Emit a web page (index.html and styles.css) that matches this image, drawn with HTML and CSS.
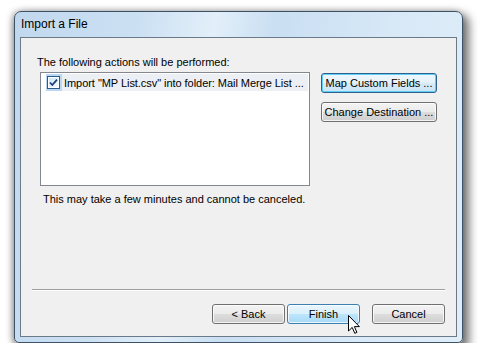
FILE: index.html
```html
<!DOCTYPE html>
<html lang="en">
  <head>
    <meta charset="UTF-8" />
    <title>Import a File</title>
    <link rel="stylesheet" href="styles.css">
  </head>
  <body>
    <div class="window">
      <div class="titlebar">
        <span class="title">Import a File</span>
      </div>
      <div class="client">
        <div class="content">
          <p class="label">The following actions will be performed:</p>
          <div class="main-row">
            <div class="listbox">
              <div class="item">
                <span class="check-cell">
                  <svg class="check" width="13" height="13" viewBox="0 0 13 13">
                    <defs>
                      <linearGradient id="cb" x1="0" y1="0" x2="1" y2="1">
                        <stop offset="0" stop-color="#cfe6f8" />
                        <stop offset="1" stop-color="#f4f9fd" />
                      </linearGradient>
                    </defs>
                    <rect x="0.5" y="0.5" width="12" height="12" fill="#fff" stroke="#2a5a8c" />
                    <rect x="2" y="2" width="9" height="9" fill="url(#cb)" />
                    <path d="M3 6.5 L5.3 9 L10 3.6" fill="none" stroke="#1d3e74" stroke-width="1.8" />
                  </svg>
                </span>
                <span class="item-text">Import "MP List.csv" into folder: Mail Merge List ...</span>
              </div>
            </div>
            <div class="side-buttons">
              <button class="btn default">Map Custom Fields ...</button>
              <button class="btn">Change Destination ...</button>
            </div>
          </div>
          <p class="note">This may take a few minutes and cannot be canceled.</p>
        </div>
        <div class="footer">
          <div class="separator"></div>
          <div class="footer-buttons">
            <button class="btn back">&lt; Back</button>
            <button class="btn hover finish">Finish</button>
            <button class="btn">Cancel</button>
          </div>
        </div>
      </div>
    </div>

    <svg class="cursor" width="12" height="19" viewBox="0 0 12 19">
      <path d="M0.5 0.5 L0.5 16 L4.2 12.4 L6.8 18.3 L8.9 17.4 L6.4 11.6 L11.4 11.6 Z" fill="#fff" stroke="#000" stroke-width="1" stroke-linejoin="miter" />
    </svg>
  </body>
</html>
```

FILE: styles.css
```css
body {
  margin: 0;
  position: relative;
  background-color: #fff;
  font-family: "Liberation Sans", Arial, sans-serif;
  font-size: 11px;
  color: #000;
}
.window {
  box-sizing: border-box;
  width: 449px;
  height: 332px;
  margin: 11px 0 0 14px;
  padding: 0 5px 5px 5px;
  display: flex;
  flex-direction: column;
  border: 1px solid #3d5266;
  border-radius: 7px 7px 5px 5px;
  background: linear-gradient(
    100deg,
    #c0d8ee 0%,
    #cce0f3 25%,
    #e2eff9 40%,
    #c9dff2 52%,
    #d7e8f7 75%,
    #e0eef9 100%
  );
  box-shadow: 4px 5px 10px 2px rgba(0, 0, 0, 0.55), -2px 0 6px rgba(0, 0, 0, 0.25);
}
.titlebar {
  height: 25px;
  display: flex;
  align-items: center;
  padding-left: 1px;
}
.title {
  font-size: 12px;
  color: #000;
  margin-top: -1px;
}
.client {
  flex: 1;
  display: flex;
  flex-direction: column;
  border: 1px solid #6b7a88;
  background-color: #f0f0f0;
}
.content {
  padding: 17px 19px 0 19px;
}
.label {
  margin: 0 0 2px -3px;
  line-height: 15px;
}
.main-row {
  display: flex;
  gap: 11px;
}
.listbox {
  box-sizing: border-box;
  width: 270px;
  height: 114px;
  padding: 1px 1px 1px 5px;
  border: 1px solid #828790;
  background-color: #fff;
}
.item {
  display: flex;
  height: 17px;
}
.check-cell {
  width: 16px;
  display: flex;
  align-items: center;
  background-color: #bcd7f1;
}
.check {
  margin-left: 1px;
  display: block;
}
.item-text {
  flex: 1;
  display: flex;
  align-items: center;
  padding-left: 2px;
  background-color: #eceff3;
  white-space: nowrap;
  letter-spacing: -0.05px;
}
.side-buttons {
  display: flex;
  flex-direction: column;
  gap: 9px;
  margin-top: 1px;
}
.side-buttons .btn {
  width: 116px;
}
.note {
  margin: 6px 0 0 3px;
  line-height: 15px;
}
.footer {
  margin-top: auto;
  padding: 0 11px 12px 11px;
}
.separator {
  border-top: 1px solid #a0a0a0;
  border-bottom: 1px solid #fff;
}
.footer-buttons {
  display: flex;
  justify-content: flex-end;
  margin-top: 13px;
}
.footer-buttons .btn {
  width: 73px;
}
.back {
  margin-right: 2px;
}
.finish {
  margin-right: 12px;
}
.btn {
  box-sizing: border-box;
  height: 20px;
  padding: 0;
  font-family: "Liberation Sans", Arial, sans-serif;
  font-size: 11px;
  color: #000;
  border: 1px solid #707070;
  border-radius: 3px;
  background: linear-gradient(#f3f3f3 0%, #ebebeb 50%, #dddddd 50%, #cfcfcf 100%);
  box-shadow: inset 0 0 0 1px rgba(255, 255, 255, 0.75);
}
.btn.default {
  border-color: #2c628b;
  background: linear-gradient(#eef7fc 0%, #e5f2fa 50%, #d6ebf7 50%, #cae4f4 100%);
  box-shadow: inset 0 0 0 1px #5fcff7;
}
.btn.hover {
  border-color: #3c7fb1;
  background: linear-gradient(#eaf6fd 0%, #d9f0fc 50%, #bee6fd 50%, #a7d9f5 100%);
}
.cursor {
  position: absolute;
  left: 348px;
  top: 315px;
}
```
